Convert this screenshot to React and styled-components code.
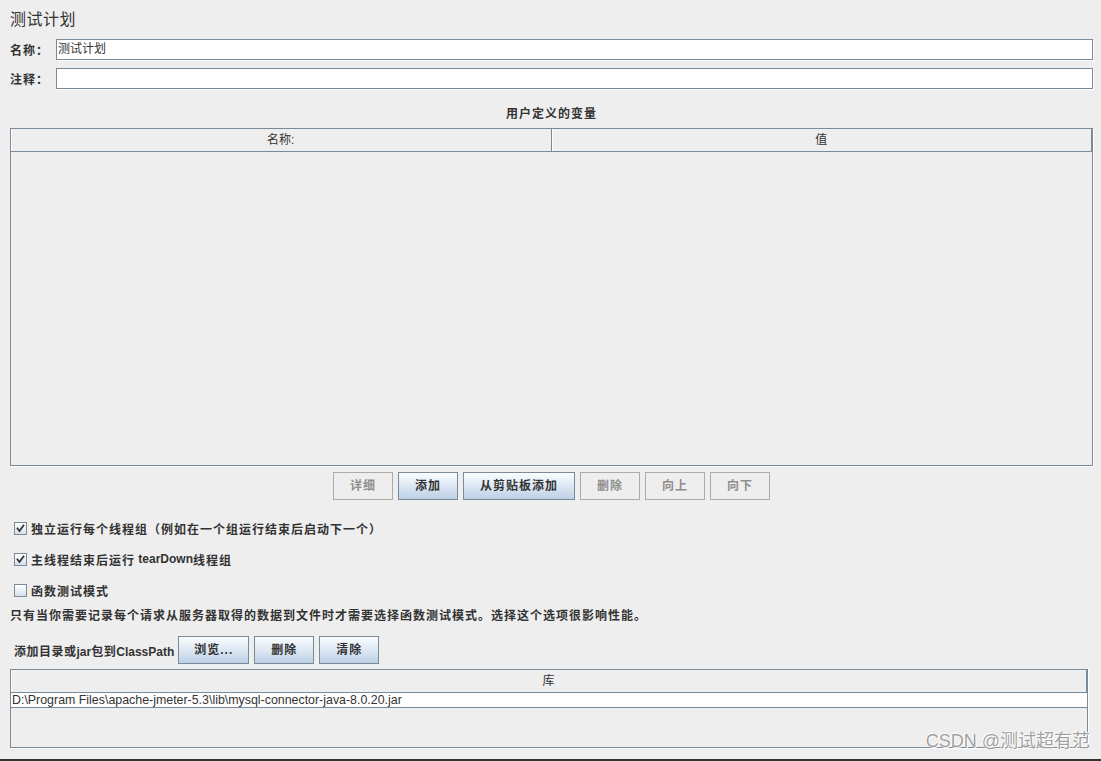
import React from 'react';
import styled, { createGlobalStyle } from 'styled-components';

const FONT = '"Liberation Sans", "Noto Sans CJK SC", sans-serif';

const GlobalStyle = createGlobalStyle`
  html, body { margin: 0; padding: 0; background: #eeeeee; }
  body {
    width: 1101px; height: 761px; overflow: hidden;
    font-family: ${FONT};
    color: #333333;
  }
`;

const Page = styled.div`
  position: relative;
  width: 1101px;
  height: 761px;
  box-sizing: border-box;
  padding: 10px 8px 0 10px;
  display: flex;
  flex-direction: column;
  border-bottom: 2px solid #333333;
`;

const Title = styled.div`
  font-size: 16px;
  line-height: 20px;
  height: 20px;
  letter-spacing: 0.5px;
  color: #333;
`;

const FieldRow = styled.div`
  display: flex;
  align-items: center;
  height: 21px;
  margin-top: ${p => p.$gap}px;
`;

const Label = styled.div`
  width: 46px;
  flex: none;
  font-size: 12px;
  font-weight: bold;
  letter-spacing: 1px;
`;

const TextBox = styled.div`
  flex: 1;
  height: 21px;
  box-sizing: border-box;
  border: 1px solid #7a8a99;
  background: #ffffff;
  box-shadow: 1px 1px 0 #ffffff;
  font-size: 12px;
  line-height: 19px;
  padding-left: 1px;
  color: #333;
`;

const SectionTitle = styled.div`
  margin-top: 17px;
  text-align: center;
  font-size: 12px;
  font-weight: bold;
  letter-spacing: 1px;
  line-height: 16px;
`;

const Table = styled.div`
  margin-top: ${p => p.$gap}px;
  margin-right: ${p => p.$mr || 0}px;
  height: ${p => p.$h}px;
  box-sizing: border-box;
  border: 1px solid #7a8a99;
  box-shadow: 1px 1px 0 #ffffff;
  display: flex;
  flex-direction: column;
`;

const HeaderRow = styled.div`
  display: grid;
  grid-template-columns: ${p => p.$cols};
  height: ${p => p.$h}px;
  border-bottom: 1px solid #7a8a99;
  flex: none;
`;

const HeaderCell = styled.div`
  text-align: center;
  font-size: 12px;
  line-height: ${p => p.$h}px;
  color: #333;
  border-right: 1px solid #7a8a99;
  box-shadow: inset 1px 0 0 #ffffff;
`;

const DataRow = styled.div`
  height: 14px;
  background: #ffffff;
  border-bottom: 1px solid #7a8a99;
  font-size: 12.4px;
  line-height: 14px;
  padding-left: 1px;
  white-space: nowrap;
  color: #333;
`;

const ButtonRow = styled.div`
  display: flex;
  justify-content: ${p => p.$justify || 'center'};
  align-items: center;
  gap: 5px;
  height: 28px;
  margin-top: ${p => p.$gap}px;
  padding-left: ${p => p.$pl || 0}px;
`;

const Button = styled.button`
  height: 28px;
  box-sizing: border-box;
  padding: 0 ${p => p.$pad || 16}px;
  margin: 0;
  font-family: ${FONT};
  font-size: 12px;
  font-weight: bold;
  letter-spacing: 1px;
  line-height: 26px;
  border-radius: 0;
  border: 1px solid ${p => (p.disabled ? '#ababab' : '#7a8a99')};
  background: ${p => (p.disabled ? '#eeeeee' : 'linear-gradient(#fbfdff 0%, #e6eef7 35%, #bcd0e6 100%)')};
  color: ${p => (p.disabled ? '#8e8e8e' : '#333333')};
  cursor: default;
`;

const CheckRow = styled.div`
  display: flex;
  align-items: center;
  height: 20px;
  margin-top: ${p => p.$gap}px;
  padding-left: 4px;
  font-size: 12px;
  font-weight: bold;
  letter-spacing: 1px;
`;

const Box = styled.span`
  width: 13px;
  height: 13px;
  box-sizing: border-box;
  border: 1px solid #7a8a99;
  background: linear-gradient(#ffffff, #d4e0ec);
  margin-right: 4px;
  display: flex;
  align-items: center;
  justify-content: center;
  flex: none;
`;

const Latin = styled.span`
  letter-spacing: 0;
`;

const Note = styled.div`
  margin-top: 8px;
  font-size: 12px;
  font-weight: bold;
  letter-spacing: 1px;
  line-height: 16px;
`;

const InlineLabel = styled.span`
  font-size: 12px;
  font-weight: bold;
  letter-spacing: 0.5px;
  margin-right: -1px;
`;

const Watermark = styled.div`
  position: absolute;
  top: 731px;
  right: 11px;
  font-family: ${FONT};
  font-size: 18px;
  line-height: 20px;
  color: rgba(128, 128, 128, 0.75);
  text-shadow: 0 0 1px #fff, 1px 1px 0 rgba(255,255,255,0.8), -1px -1px 0 rgba(255,255,255,0.8);
  white-space: nowrap;
`;

function Check({ checked }) {
  return (
    <Box>
      {checked && (
        <svg width="9" height="9" viewBox="0 0 9 9">
          <path d="M1.5 4.5 L3.5 7 L7.5 1.5" fill="none" stroke="#333" strokeWidth="1.8" strokeLinecap="square" />
        </svg>
      )}
    </Box>
  );
}

export default function App() {
  return (
    <>
      <GlobalStyle />
      <Page>
        <Title>测试计划</Title>
        <FieldRow $gap={9}>
          <Label>名称：</Label>
          <TextBox>测试计划</TextBox>
        </FieldRow>
        <FieldRow $gap={8}>
          <Label>注释：</Label>
          <TextBox />
        </FieldRow>

        <SectionTitle>用户定义的变量</SectionTitle>
        <Table $gap={6} $h={338}>
          <HeaderRow $cols="1fr 1fr" $h={22}>
            <HeaderCell $h={22}>名称:</HeaderCell>
            <HeaderCell $h={22}>值</HeaderCell>
          </HeaderRow>
        </Table>

        <ButtonRow $gap={6}>
          <Button disabled>详细</Button>
          <Button>添加</Button>
          <Button>从剪贴板添加</Button>
          <Button disabled>删除</Button>
          <Button disabled>向上</Button>
          <Button disabled>向下</Button>
        </ButtonRow>

        <CheckRow $gap={18}>
          <Check checked />
          独立运行每个线程组（例如在一个组运行结束后启动下一个）
        </CheckRow>
        <CheckRow $gap={11}>
          <Check checked />
          主线程结束后运行 <Latin>&nbsp;tearDown</Latin>线程组
        </CheckRow>
        <CheckRow $gap={11}>
          <Check />
          函数测试模式
        </CheckRow>

        <Note>只有当你需要记录每个请求从服务器取得的数据到文件时才需要选择函数测试模式。选择这个选项很影响性能。</Note>

        <ButtonRow $gap={12} $justify="flex-start" $pl={4}>
          <InlineLabel>
            添加目录或<Latin>jar</Latin>包到<Latin>ClassPath</Latin>
          </InlineLabel>
          <Button $pad={15}>浏览...</Button>
          <Button>删除</Button>
          <Button>清除</Button>
        </ButtonRow>

        <Table $gap={5} $h={79} $mr={5}>
          <HeaderRow $cols="1fr" $h={22}>
            <HeaderCell $h={22}>库</HeaderCell>
          </HeaderRow>
          <DataRow>D:\Program Files\apache-jmeter-5.3\lib\mysql-connector-java-8.0.20.jar</DataRow>
        </Table>

        <Watermark>CSDN @测试超有范</Watermark>
      </Page>
    </>
  );
}
